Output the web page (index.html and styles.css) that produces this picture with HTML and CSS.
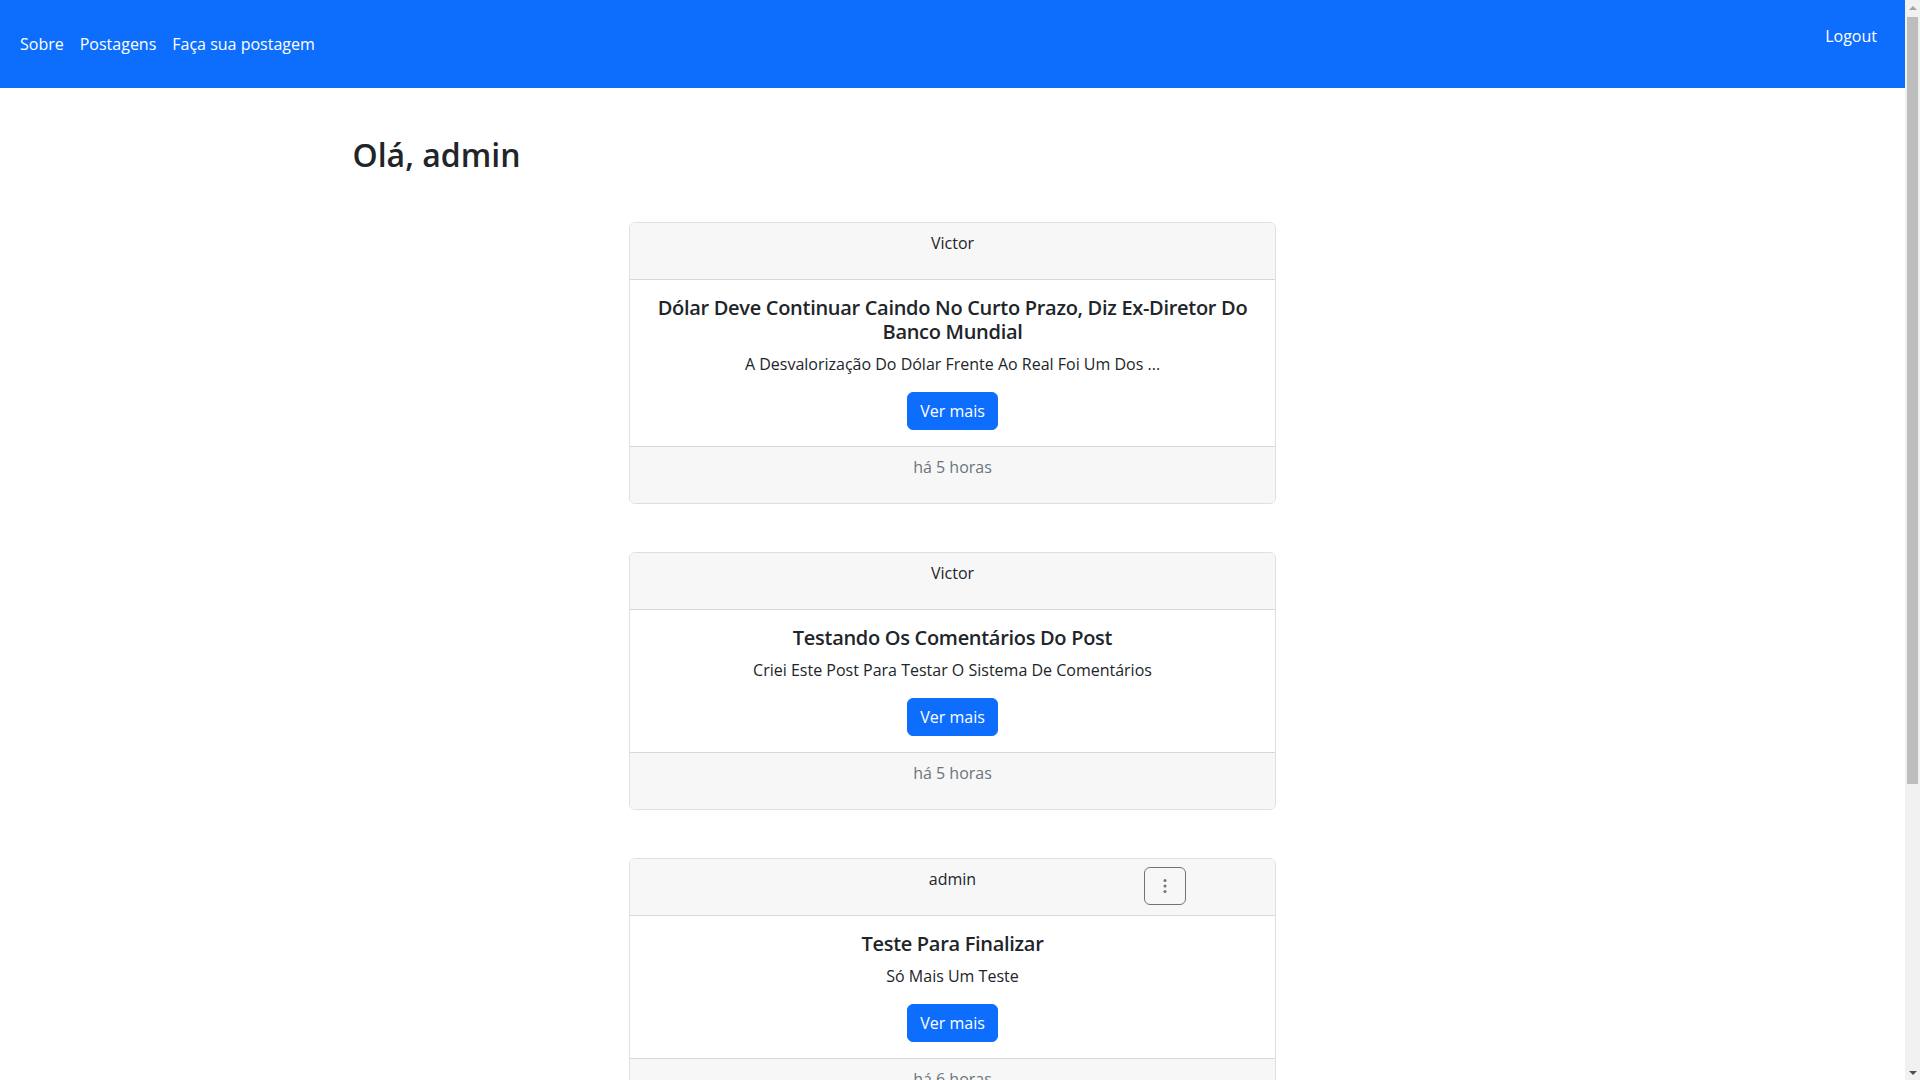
FILE: index.html
```html
<!DOCTYPE html>
<html lang="pt-BR">
<head>
<meta charset="utf-8">
<title>Postagens</title>
<link rel="stylesheet" href="styles.css">
</head>
<body>
<div class="page">
<nav class="navbar">
  <ul class="nav-links">
    <li><a class="nav-link" href="#">Sobre</a></li>
    <li><a class="nav-link" href="#">Postagens</a></li>
    <li><a class="nav-link" href="#">Faça sua postagem</a></li>
  </ul>
  <a class="nav-link logout" href="#">Logout</a>
</nav>

<main class="container">
  <h2 class="greeting">Olá, admin</h2>

  <section class="feed">
    <article class="card">
      <header class="card-header">
        <div class="col"></div>
        <div class="col author">Victor</div>
        <div class="col"></div>
      </header>
      <div class="card-body">
        <h5 class="card-title">Dólar Deve Continuar Caindo No Curto Prazo, Diz Ex-Diretor Do Banco Mundial</h5>
        <p class="card-text">A Desvalorização Do Dólar Frente Ao Real Foi Um Dos ...</p>
        <a class="btn btn-primary" href="#">Ver mais</a>
      </div>
      <footer class="card-footer">há 5 horas</footer>
    </article>

    <article class="card">
      <header class="card-header">
        <div class="col"></div>
        <div class="col author">Victor</div>
        <div class="col"></div>
      </header>
      <div class="card-body">
        <h5 class="card-title">Testando Os Comentários Do Post</h5>
        <p class="card-text">Criei Este Post Para Testar O Sistema De Comentários</p>
        <a class="btn btn-primary" href="#">Ver mais</a>
      </div>
      <footer class="card-footer">há 5 horas</footer>
    </article>

    <article class="card">
      <header class="card-header">
        <div class="col"></div>
        <div class="col author">admin</div>
        <div class="col menu-col">
          <button class="btn btn-outline" type="button" aria-label="Opções">
            <svg width="16" height="16" viewBox="0 0 16 16" fill="currentColor"><circle cx="8" cy="2.5" r="1.5"/><circle cx="8" cy="8" r="1.5"/><circle cx="8" cy="13.5" r="1.5"/></svg>
          </button>
        </div>
      </header>
      <div class="card-body">
        <h5 class="card-title">Teste Para Finalizar</h5>
        <p class="card-text">Só Mais Um Teste</p>
        <a class="btn btn-primary" href="#">Ver mais</a>
      </div>
      <footer class="card-footer">há 6 horas</footer>
    </article>
  </section>
</main>
</div>
<aside class="scrollbar" aria-hidden="true">
  <div class="sb-arrow sb-up"></div>
  <div class="sb-track"><div class="sb-thumb"></div></div>
  <div class="sb-arrow sb-down"></div>
</aside>
</body>
</html>
```
FILE: styles.css
```css
* { box-sizing: border-box; }

html, body {
  height: 100%;
  overflow: hidden;
}

body {
  display: flex;
  margin: 0;
  font-family: "Open Sans", Lato, "Liberation Sans", sans-serif;
  font-size: 16px;
  line-height: 1.5;
  color: #212529;
  background: #fff;
}

.page {
  flex: 1;
  min-width: 0;
  height: 100vh;
  overflow: hidden;
}

/* imitation of the browser's vertical scrollbar */
.scrollbar {
  display: flex;
  flex-direction: column;
  flex: 0 0 15px;
  height: 100vh;
  background: #f1f1f1;
}

.sb-arrow {
  flex: 0 0 15px;
  display: flex;
  align-items: center;
  justify-content: center;
}

.sb-up::before,
.sb-down::before {
  content: "";
  width: 0;
  height: 0;
  border-left: 4px solid transparent;
  border-right: 4px solid transparent;
}

.sb-up::before { border-bottom: 4px solid #a3a3a3; }
.sb-down::before { border-top: 4px solid #505050; }

.sb-track {
  flex: 1;
  padding: 2px 2px 0;
}

.sb-thumb {
  height: 767px;
  background: #bdbdbd;
}

.navbar {
  display: flex;
  justify-content: space-between;
  align-items: center;
  height: 88px;
  padding: 0 12px;
  background: #0d6efd;
}

.nav-links {
  display: flex;
  list-style: none;
  margin: 0;
  padding: 0;
}

.nav-link {
  display: block;
  padding: 0 8px;
  color: #fff;
  text-decoration: none;
}

.logout {
  align-self: flex-start;
  margin-top: 24px;
  padding-right: 16px;
}

.container {
  width: 1200px;
  margin: 0 auto;
}

.greeting {
  margin: 48px 0 48px;
  font-size: 32px;
  font-weight: 600;
  line-height: 1.2;
}

.feed {
  display: flex;
  flex-direction: column;
  align-items: center;
  gap: 48px;
}

.card {
  width: 647px;
  border: 1px solid rgba(0, 0, 0, 0.125);
  border-radius: 6px;
  overflow: hidden;
  text-align: center;
}

.card-header {
  display: grid;
  grid-template-columns: repeat(3, 1fr);
  column-gap: 24px;
  align-items: start;
  min-height: 57px;
  padding: 8px 16px;
  background: #f7f7f7;
  border-bottom: 1px solid rgba(0, 0, 0, 0.125);
}

.menu-col {
  display: flex;
  justify-content: center;
}

.card-body {
  padding: 16px;
}

.card-title {
  margin: 0 0 8px;
  font-size: 20px;
  font-weight: 600;
  line-height: 1.2;
  letter-spacing: -0.3px;
}

.card-text {
  margin: 0 0 16px;
}

.card-footer {
  min-height: 57px;
  padding: 8px 16px;
  background: #f7f7f7;
  border-top: 1px solid rgba(0, 0, 0, 0.125);
  color: #6c757d;
}

.btn {
  display: inline-block;
  padding: 6px 12px;
  font: inherit;
  line-height: 24px;
  border: 1px solid transparent;
  border-radius: 6px;
  text-decoration: none;
  cursor: pointer;
}

.btn-primary {
  color: #fff;
  background: #0d6efd;
  border-color: #0d6efd;
}

.btn-outline {
  display: flex;
  align-items: center;
  justify-content: center;
  height: 38px;
  color: #6c757d;
  background: transparent;
  border-color: #6c757d;
}
```
